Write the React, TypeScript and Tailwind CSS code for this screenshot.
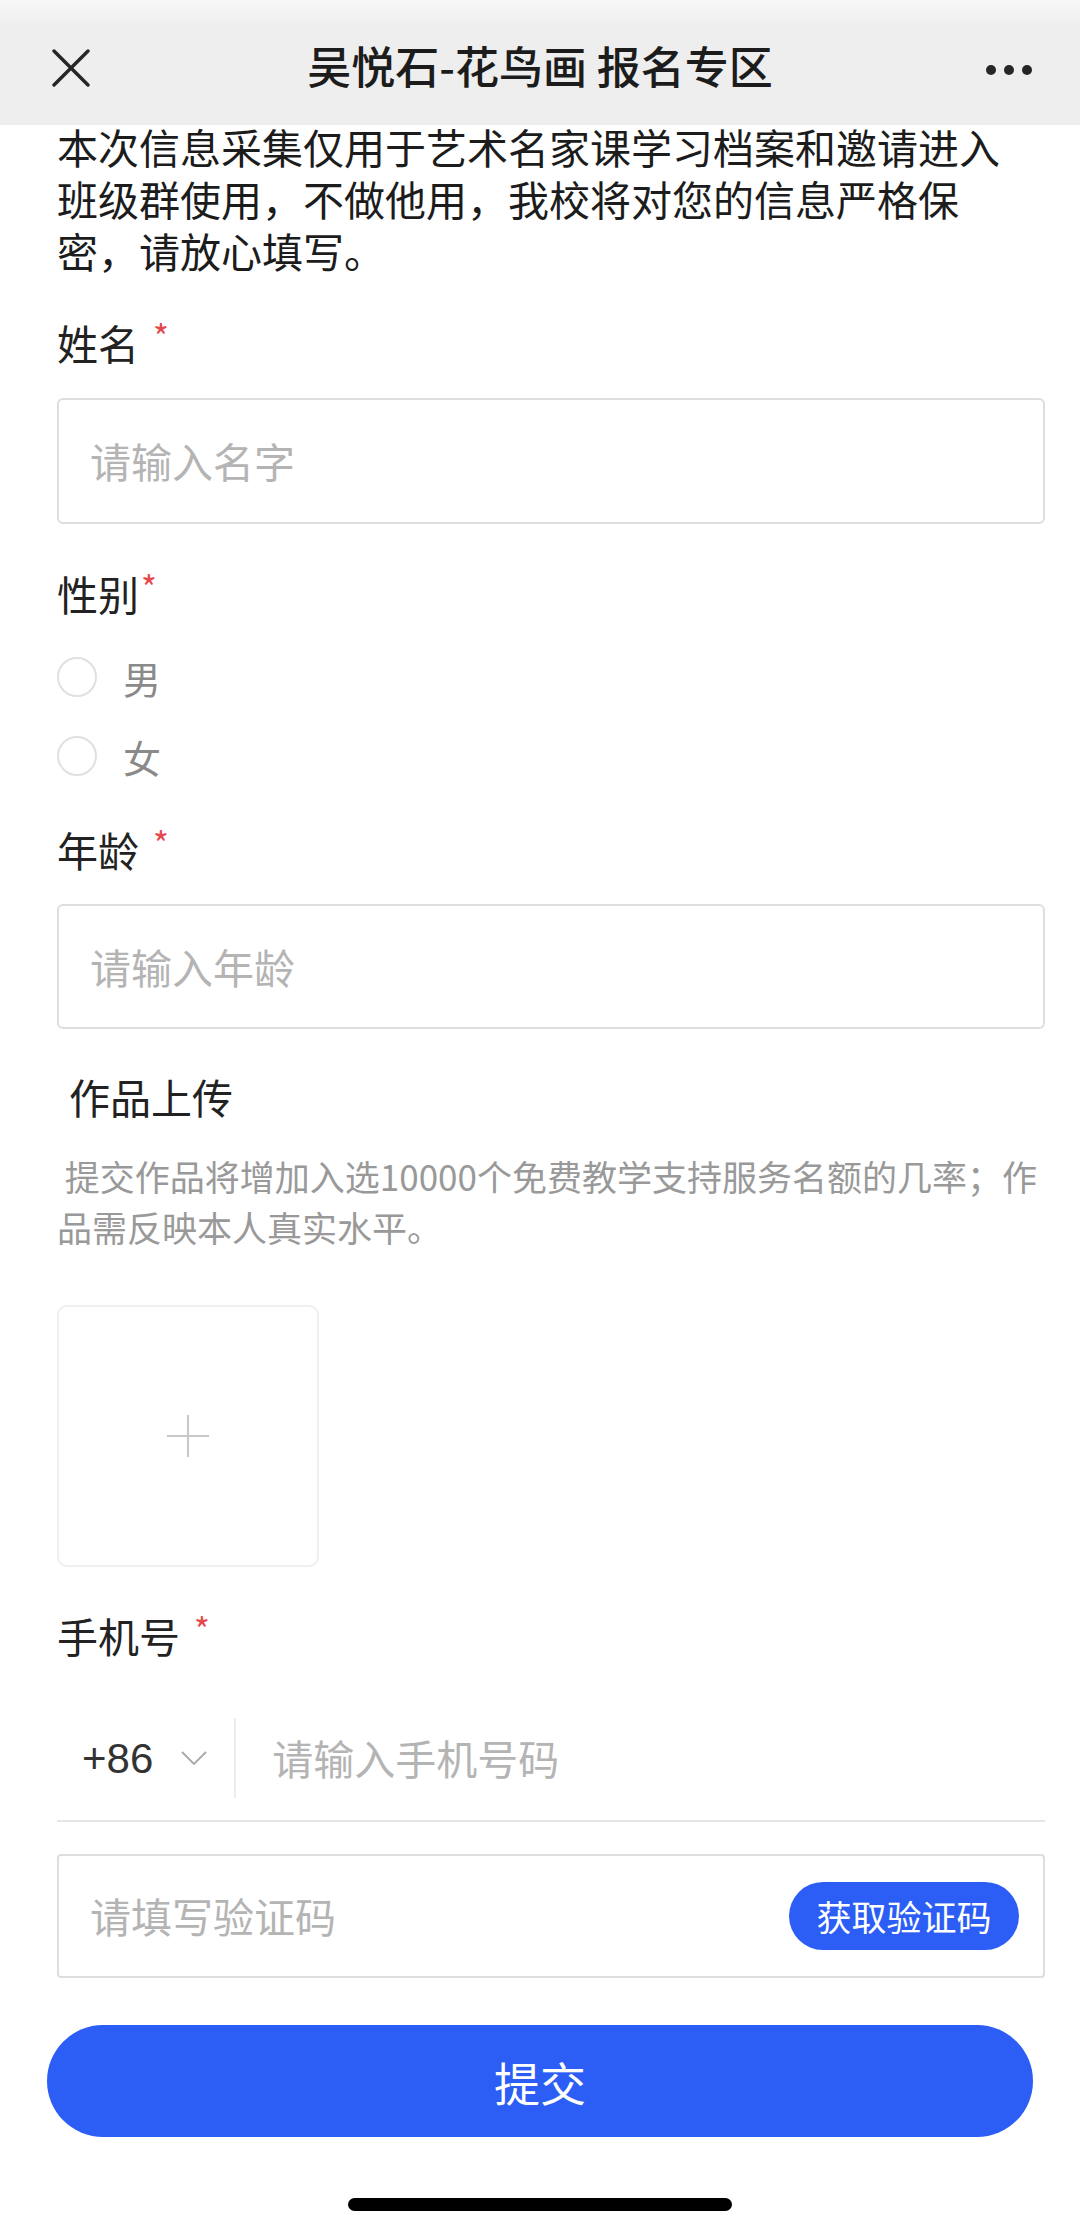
import type { ReactNode } from "react";

const cjk = "font-['Noto_Sans_CJK_SC','Noto_Sans',sans-serif]";

function Label({ children, tight = false }: { children: ReactNode; tight?: boolean }) {
  return (
    <div className="flex h-[56px] items-center text-[41px] leading-[56px] text-[#222]">
      <span>{children}</span>
      <span className={`${tight ? "ml-[2px]" : "ml-[14px]"} self-start pt-[2px] text-[34px] leading-[40px] text-[#e5484d]`}>
        *
      </span>
    </div>
  );
}

function TextBox({ placeholder, h = "h-[126px]" }: { placeholder: string; h?: string }) {
  return (
    <div className={`flex ${h} items-center rounded-[6px] border-2 border-[#dedede] pl-[31px]`}>
      <span className="text-[41px] text-[#b4b4b4]">{placeholder}</span>
    </div>
  );
}

function Radio({ label }: { label: string }) {
  return (
    <div className="flex h-[60px] items-center">
      <span className="h-[40px] w-[40px] rounded-full border-2 border-[#e0e0e0]" />
      <span className="ml-[26px] text-[38px] text-[#8a8a8a]">{label}</span>
    </div>
  );
}

export default function App() {
  return (
    <div className={`min-h-[2232px] w-[1080px] bg-white ${cjk}`}>
      <header className="relative flex h-[125px] items-center justify-center bg-[linear-gradient(to_bottom,#f7f7f7_0px,#eeeeee_28px,#eeeeee_100%)] pt-[4px]">
        <svg
          className="absolute left-[52px] top-[49px]"
          width="38"
          height="38"
          viewBox="0 0 38 38"
          fill="none"
          stroke="#262626"
          strokeWidth="3.4"
          strokeLinecap="round"
        >
          <path d="M2 2 L36 36 M36 2 L2 36" />
        </svg>
        <h1 className="text-[44px] font-medium leading-none text-[#1c1c1c]">吴悦石-花鸟画 报名专区</h1>
        <div className="absolute right-[48px] top-[65px] flex gap-[8px]">
          <span className="h-[10px] w-[10px] rounded-full bg-[#262626]" />
          <span className="h-[10px] w-[10px] rounded-full bg-[#262626]" />
          <span className="h-[10px] w-[10px] rounded-full bg-[#262626]" />
        </div>
      </header>

      <main className="pl-[57px] pr-[35px]">
        <p className="-mt-[5px] pr-[28px] text-[41px] leading-[52px] text-[#1c1c1c]">
          本次信息采集仅用于艺术名家课学习档案和邀请进入班级群使用，不做他用，我校将对您的信息严格保密，请放心填写。
        </p>

        <div className="mt-[38px]">
          <Label>姓名</Label>
        </div>
        <div className="mt-[28px]">
          <TextBox placeholder="请输入名字" />
        </div>

        <div className="mt-[41px]">
          <Label tight>性别</Label>
        </div>
        <div className="mt-[26px] flex flex-col gap-[19px]">
          <Radio label="男" />
          <Radio label="女" />
        </div>

        <div className="mt-[35px]">
          <Label>年龄</Label>
        </div>
        <div className="mt-[27px]">
          <TextBox placeholder="请输入年龄" h="h-[125px]" />
        </div>

        <div className="mt-[40px] flex h-[56px] items-center pl-[12px] text-[41px] text-[#222]">作品上传</div>
        <p className="mt-[25px] text-[35px] leading-[51px] text-[#999]">
          &nbsp;提交作品将增加入选10000个免费教学支持服务名额的几率；作品需反映本人真实水平。
        </p>

        <div className="mt-[53px] flex h-[262px] w-[262px] items-center justify-center rounded-[10px] border-2 border-[#efefef]">
          <svg width="42" height="42" viewBox="0 0 42 42" stroke="#c9c9c9" strokeWidth="2.2">
            <path d="M21 0 V42 M0 21 H42" />
          </svg>
        </div>

        <div className="mt-[40px]">
          <Label>手机号</Label>
        </div>

        <div className="mt-[33px] flex h-[126px] items-center border-b-2 border-[#e6e6e6]">
          <span className="ml-[25px] font-['Liberation_Sans',sans-serif] text-[42px] text-[#333]">+86</span>
          <svg className="ml-[28px]" width="26" height="15" viewBox="0 0 26 15" fill="none" stroke="#a8a8a8" strokeWidth="1.8">
            <path d="M1 1 L13 13 L25 1" />
          </svg>
          <span className="ml-[27px] h-[80px] w-[2px] bg-[#ececec]" />
          <span className="ml-[36px] text-[41px] text-[#b4b4b4]">请输入手机号码</span>
        </div>

        <div className="mt-[32px] flex h-[124px] items-center justify-between rounded-[4px] border-2 border-[#dedede] pl-[31px] pr-[24px]">
          <span className="text-[41px] text-[#b4b4b4]">请填写验证码</span>
          <button
            type="button"
            className="flex h-[68px] w-[230px] items-center justify-center rounded-full bg-[#2c5ef6] text-[35px] text-white"
          >
            获取验证码
          </button>
        </div>

        <button
          type="button"
          className="-ml-[10px] mt-[47px] flex h-[112px] w-[986px] items-center justify-center rounded-full bg-[#2c5ef6] text-[46px] text-white"
        >
          提交
        </button>
      </main>

      <div className="mx-auto mt-[61px] h-[13px] w-[384px] rounded-full bg-black" />
    </div>
  );
}
